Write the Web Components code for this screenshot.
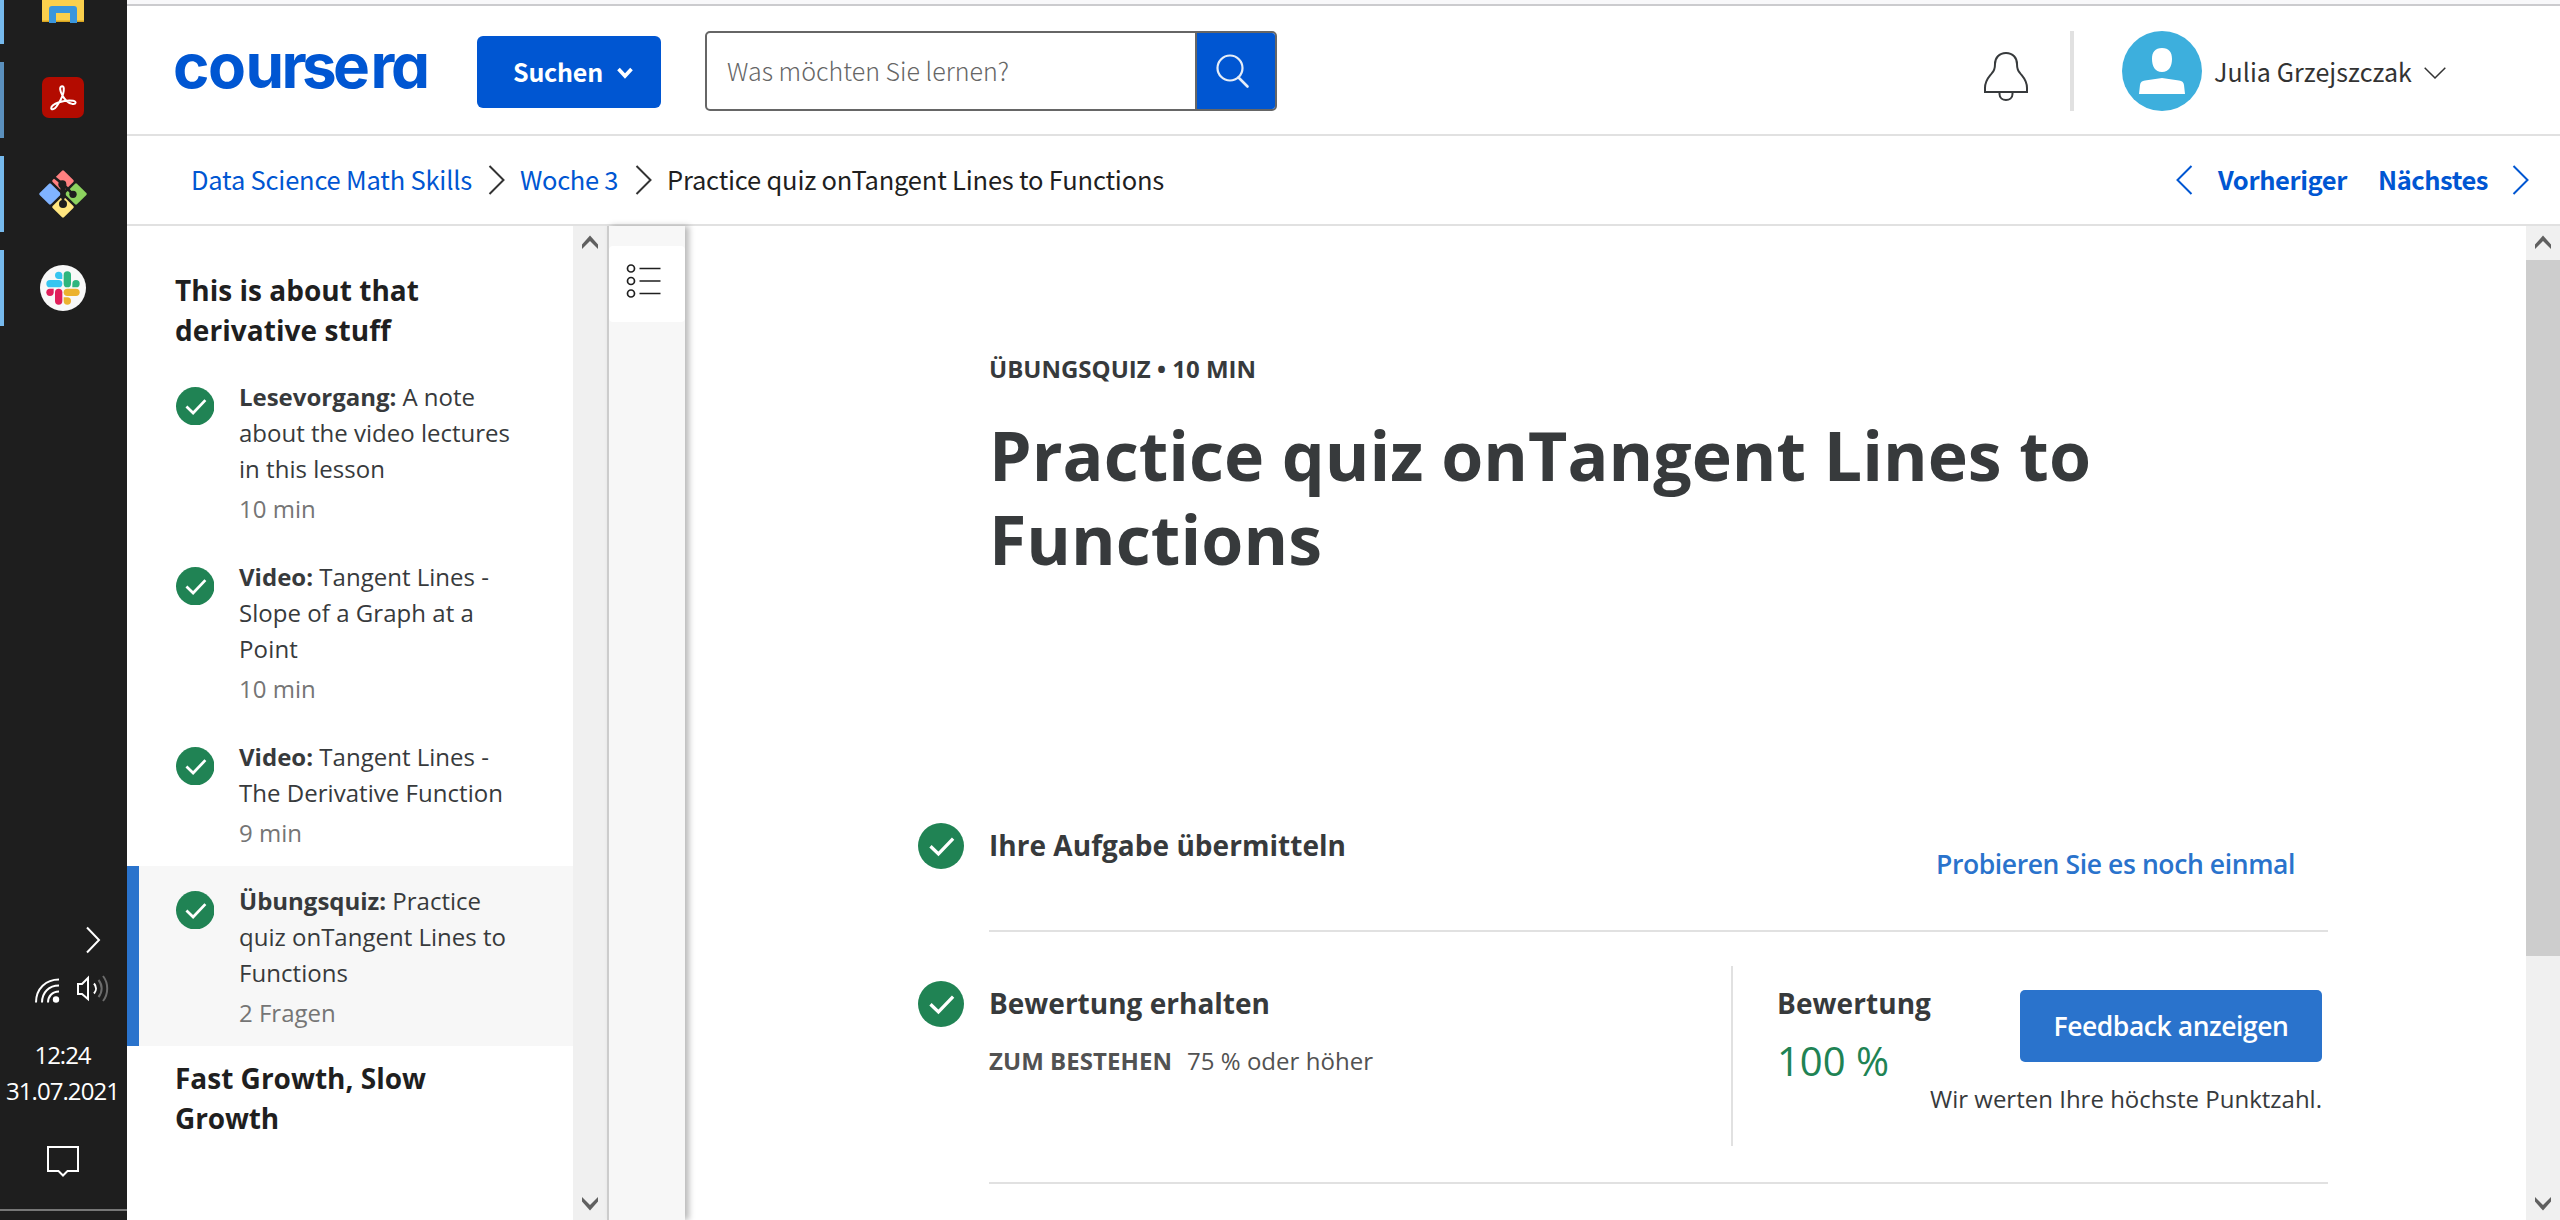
<!DOCTYPE html>
<html lang="de">
<head>
<meta charset="utf-8">
<title>Coursera</title>
<style>
  html, body { margin: 0; height: 100%; overflow: hidden; background: #fff; }
  body { font-family: "Open Sans", "Noto Sans", sans-serif; color: #373a3c; }
</style>
</head>
<body>
<course-app></course-app>
<script>
const SOURCE = '"Noto Sans CJK SC", "Noto Sans", sans-serif';

function define(name, html, after) {
  customElements.define(name, class extends HTMLElement {
    constructor() {
      super();
      this.attachShadow({ mode: 'open' });
    }
    connectedCallback() {
      this.shadowRoot.innerHTML = typeof html === 'function' ? html(this) : html;
      if (after) after(this);
    }
  });
}

/* One line of text, tracked so that it spans the width given in its attribute. */
define('text-line', `<style>
  :host { display: block; white-space: nowrap; }
  span { display: inline-block; white-space: pre; }
</style><span><slot></slot></span>`, el => {
  const w = parseFloat(el.getAttribute('width'));
  if (!w) return;
  const span = el.shadowRoot.querySelector('span');
  const fit = () => {
    el.style.width = 'auto';
    span.style.letterSpacing = '0';
    const n = el.textContent.length;
    const natural = span.getBoundingClientRect().width;
    if (natural) span.style.letterSpacing = ((w - natural) / n) + 'px';
    el.style.width = w + 'px';
  };
  requestAnimationFrame(fit);
});

define('check-mark', el => `<style>
  :host { display: block; flex: none; width: ${el.getAttribute('size')}px; height: ${el.getAttribute('size')}px; }
  svg { display: block; width: 100%; height: 100%; }
</style><svg viewBox="0 0 38 38"><circle cx="19" cy="19" r="19" fill="#208354"/>
<path d="M10.3 19.2l6.6 6.4L29 13" fill="none" stroke="#fff" stroke-width="2.7"/></svg>`);

define('scroll-bar', el => `<style>
  :host { display: flex; flex-direction: column; flex: none; width: 34px; height: 994px; background: #f0f0f0; }
  svg { display: block; flex: none; width: 34px; height: 34px; }
  .thumb { height: ${el.getAttribute('thumb') || 0}px; background: #cdcdcd; }
  .gap { flex: 1; }
</style>
<svg viewBox="0 0 34 34"><path d="M9 18.500L17 9.500l8 9v4.500l-8-8-8 8z" fill="#606060"/></svg>
<div class="thumb"></div><div class="gap"></div>
<svg viewBox="0 0 34 34"><path d="M9 11l8 8 8-8v4.500l-8 9-8-9z" fill="#606060"/></svg>`);

define('task-bar', `<style>
  :host { display: flex; flex-direction: column; width: 127px; height: 1220px; flex: none; background: #1e1e1e; color: #fff; overflow: hidden; }
  .apps { display: flex; flex-direction: column; gap: 18px; margin-top: -32px; }
  .app { display: flex; align-items: center; height: 76px; }
  .app::before { content: ""; width: 4px; height: 76px; background: #76b9ed; }
  .app.dim::before { background: #5b90bd; }
  .app svg { display: block; margin-left: 35px; }
  svg { display: block; flex: none; overflow: visible; }
  .more { margin: 600px 0 0 86px; }
  .status { display: flex; margin: 20px 0 0 34px; gap: 16px; }
  .clock { margin-top: 33px; display: flex; flex-direction: column; align-items: center; font: 24px/36px "Open Sans", "Noto Sans", sans-serif; height: 72px; padding-right: 2px; }
  .note { margin: 35px 0 0 46px; }
  hr { margin: 31px 0 0; border: 0; height: 2px; background: #777; flex: none; }
</style>
<div class="apps">
  <div class="app"><svg width="48" height="48" viewBox="39 -18 48 48"><path d="M42-18h42v40H42z" fill="#fbd04d"/><path d="M42 20.500h42V22H42z" fill="#d9a520"/><path d="M49 23V9q0-3 3-3h22q3 0 3 3v14h-7V13H56v10z" fill="#3a96dd"/></svg></div>
  <div class="app dim"><svg width="48" height="48" viewBox="39 76 48 48"><rect x="42" y="77" width="42" height="41" rx="7" fill="#b30b00"/>
    <path transform="translate(42 77)" d="M20 9.200c-3 .3-1.900 5 .4 9.200 2.400 4.200 6.400 7.700 9.800 8.500 4 .8 4.600-2.500 1-3.100-4-.7-10.200.2-14.200 1.500-4.300 1.500-7.800 4-7.800 6 .2 2 3.400.9 5.300-1.800 2.700-3.800 5.500-8.600 6.700-13 .9-3.500 1.100-7.500-1.200-7.300z" fill="none" stroke="#fff" stroke-width="2"/></svg></div>
  <div class="app"><svg width="48" height="48" viewBox="117 510 144 144">
    <g><rect x="-24" y="-24" width="48" height="48" rx="4" transform="translate(189 543) rotate(45)" fill="#ff8080"/>
    <rect x="-24" y="-24" width="48" height="48" rx="4" transform="translate(150 582) rotate(45)" fill="#80b3ff"/>
    <rect x="-24" y="-24" width="48" height="48" rx="4" transform="translate(228 582) rotate(45)" fill="#8dd35f"/>
    <rect x="-24" y="-24" width="48" height="48" rx="4" transform="translate(189 621) rotate(45)" fill="#ffe680"/></g>
    <path d="M163 532l26 21v58M189 552l30 31" fill="none" stroke="#1e1e1e" stroke-width="8"/>
    <path d="M181 548h16v44l-8 8-8-8z" fill="#1e1e1e"/>
    <g fill="#1e1e1e"><circle cx="187" cy="553" r="12"/><circle cx="219" cy="583" r="11"/><circle cx="189" cy="612" r="12"/></g></svg></div>
  <div class="app"><svg width="48" height="48" viewBox="117 792 144 144"><circle cx="189" cy="864" r="69" fill="#f8f8f8"/>
    <g fill="#36c5f0"><rect x="139" y="840" width="48" height="22" rx="11"/><path d="M187 837h-11a11 11 0 1 1 11-11z"/></g>
    <g fill="#2eb67d"><rect x="191" y="814" width="22" height="48" rx="11"/><path d="M217 862v-11a11 11 0 1 1 11 11z"/></g>
    <g fill="#ecb22e"><rect x="191" y="866" width="48" height="22" rx="11"/><path d="M191 892h11a11 11 0 1 1-11 11z"/></g>
    <g fill="#e01e5a"><rect x="165" y="866" width="22" height="48" rx="11"/><path d="M161 866v11a11 11 0 1 1-11-11z"/></g></svg></div>
</div>
<svg class="more" width="14" height="28" viewBox="0 0 14 28"><path d="M1 1.500L13 14 1 26.500" fill="none" stroke="#fff" stroke-width="2"/></svg>
<div class="status">
  <svg width="26" height="30" viewBox="0 0 26 30"><g fill="none" stroke="#fff" stroke-width="2"><path d="M2 28.500C2 14.500 12 5.500 25 5.500"/><path d="M8 28.500C8 18.500 15 11.500 25 11.500"/><path d="M14 28.500c0-6 4-11 11-11"/></g><circle cx="22" cy="25.500" r="3.200" fill="#fff"/></svg>
  <svg width="34" height="30" viewBox="0 0 34 30"><g fill="none" stroke-width="2"><path d="M12 4v21l-6-5H2V10h4z" stroke="#fff"/><path d="M18 9.500c2.600 3 2.600 7 0 10" stroke="#fff"/><path d="M22.500 6c4.200 5 4.200 12 0 17M27 2c5.600 7 5.600 18 0 25" stroke="#6c6c6c"/></g></svg>
</div>
<div class="clock"><text-line width="56">12:24</text-line><text-line width="113">31.07.2021</text-line></div>
<svg class="note" width="34" height="34" viewBox="0 0 34 34"><path d="M2 3h30v24H21.500L17 31.500 12.500 27H2z" fill="none" stroke="#fff" stroke-width="2"/></svg>
<hr>`);

define('page-header', `<style>
  :host { display: flex; align-items: center; height: 130px; box-sizing: border-box; padding: 2px 114px 0 47px; border-bottom: 2px solid #e1e1e1; font-family: ${SOURCE}; }
  svg { display: block; flex: none; overflow: visible; }
  .btn { display: flex; align-items: center; box-sizing: border-box; width: 184px; height: 72px; margin-left: 47px; margin-top: 2px; padding: 0 28px 2px 36px; border-radius: 6px; background: #0056d2; color: #fff; font-weight: 700; font-size: 25px; line-height: 40px; }
  .btn svg { margin: 3px 0 0 14px; }
  .search { display: flex; box-sizing: border-box; width: 572px; height: 80px; margin-left: 44px; border: 2px solid #666; border-radius: 5px; overflow: hidden; }
  .search .field { flex: 1; display: flex; align-items: center; padding: 0 0 2px 20px; font-weight: 300; font-size: 25px; line-height: 40px; color: #666; }
  .search .go { width: 78px; border-left: 2px solid #666; background: #0056d2; display: flex; align-items: center; }
  .go svg { margin-left: 18px; }
  .bell { margin: 12px 0 0 auto; }
  .sep { width: 4px; height: 80px; margin-left: 41px; background: #e1e1e1; }
  .face { margin-left: 48px; }
  .name { margin: -1px 12px 0 12px; font-size: 25px; line-height: 40px; color: #333; }
</style>
<svg width="256" height="60" viewBox="0 0 256 60"><text x="-1 34 71.5 107.5 128 159 196.5 217" y="47" font-family="Inter, sans-serif" font-weight="750" font-size="62" fill="#0056d2" style="font-feature-settings:'cv11'">coursera</text></svg>
<div class="btn"><text-line width="90">Suchen</text-line><svg width="16" height="12" viewBox="0 0 16 12"><path d="M1.500 2L8 9l6.500-7" fill="none" stroke="#fff" stroke-width="3.600"/></svg></div>
<div class="search"><div class="field"><text-line width="282">Was möchten Sie lernen?</text-line></div>
  <div class="go"><svg width="34" height="34" viewBox="0 0 34 34"><circle cx="15" cy="14" r="12.500" fill="none" stroke="#e5edf8" stroke-width="2.200"/><path d="M23.500 23.500l9 9" stroke="#e5edf8" stroke-width="2.600" stroke-linecap="round"/></svg></div></div>
<svg class="bell" width="46" height="50" viewBox="0 0 46 50"><path d="M2 40v-4c0-8 4-11 7-15 3-3 3-6 3-9 0-6 4-11 11-11s11 5 11 11c0 3 0 6 3 9 3 4 7 7 7 15v4zM16.500 40v2c0 8 13 8 13 0v-2" fill="none" stroke="#373a3c" stroke-width="2"/></svg>
<div class="sep"></div>
<svg class="face" width="80" height="80" viewBox="0 0 80 80"><circle cx="40" cy="40" r="40" fill="#3dafdd"/><path d="M40 17c7 0 10 4 10 11 0 7-3 13-10 13s-10-6-10-13c0-7 3-11 10-11zM17 63l1-9c.5-3 2-4 5-4.500L40 47l17 2.500c3 .5 4.500 1.500 5 4.500l1 9z" fill="#fff"/></svg>
<text-line class="name" width="198">Julia Grzejszczak</text-line>
<svg style="margin-top:3px" width="22" height="12" viewBox="0 0 22 12"><path d="M.7.700L11 11 21.300.700" fill="none" stroke="#333" stroke-width="1.500"/></svg>`);

define('bread-crumbs', `<style>
  :host { display: flex; align-items: center; box-sizing: border-box; height: 90px; padding: 0 31px 0 64px; border-bottom: 2px solid #e1e1e1; font-family: ${SOURCE}; font-size: 25.500px; line-height: 40px; color: #1f1f1f; }
  text-line { margin-top: -3px; }
  .link { color: #0056d2; }
  .nav { color: #0056d2; font-weight: 700; }
  svg { display: block; flex: none; }
  .grow { flex: 1; }
</style>
<text-line class="link" width="281">Data Science Math Skills</text-line>
<svg style="margin:0 15px 0 16px" width="17" height="30" viewBox="0 0 17 30"><path d="M1.500 1L15.500 15 1.500 29" fill="none" stroke="#333" stroke-width="2"/></svg>
<text-line class="link" width="98">Woche 3</text-line>
<svg style="margin:0 15px 0 17px" width="17" height="30" viewBox="0 0 17 30"><path d="M1.500 1L15.500 15 1.500 29" fill="none" stroke="#333" stroke-width="2"/></svg>
<text-line width="497">Practice quiz onTangent Lines to Functions</text-line>
<div class="grow"></div>
<svg style="margin-right:25px" width="17" height="30" viewBox="0 0 17 30"><path d="M15.500 1L1.500 15l14 14" fill="none" stroke="#0056d2" stroke-width="2"/></svg>
<text-line class="nav" width="129">Vorheriger</text-line>
<text-line class="nav" width="110" style="margin-left:31px">Nächstes</text-line>
<svg style="margin-left:24px" width="17" height="30" viewBox="0 0 17 30"><path d="M1.500 1L15.500 15 1.500 29" fill="none" stroke="#0056d2" stroke-width="2"/></svg>`);

define('lesson-item', el => `<style>
  :host { display: flex; box-sizing: border-box; padding: 17px 0 15px 36px; border-left: 12px solid ${el.hasAttribute('current') ? '#2a73cc' : 'transparent'}; ${el.hasAttribute('current') ? 'background:#f7f7f7;' : ''} font-size: 24px; line-height: 36px; }
  check-mark { margin: 7.500px 25px 0 .5px; }
  .meta { margin-top: 4px; color: #757575; }
</style><check-mark size="38.5"></check-mark><div><slot></slot><div class="meta">${el.getAttribute('meta')}</div></div>`);

define('lesson-list', `<style>
  :host { display: block; width: 446px; height: 994px; flex: none; overflow: hidden; }
  h2 { margin: 0; padding: 12px 0 12px 48px; font-size: 28px; line-height: 40px; font-weight: 700; color: #1f1f1f; }
  h2:first-of-type { padding-top: 44px; }
  b { font-weight: 700; }
</style>
<h2><text-line width="244">This is about that</text-line><text-line width="216">derivative stuff</text-line></h2>
<lesson-item meta="10 min"><text-line width="236"><b>Lesevorgang:</b> A note</text-line><text-line width="271">about the video lectures</text-line><text-line width="146">in this lesson</text-line></lesson-item>
<lesson-item meta="10 min"><text-line width="250"><b>Video:</b> Tangent Lines -</text-line><text-line width="235">Slope of a Graph at a</text-line><text-line width="59">Point</text-line></lesson-item>
<lesson-item meta="9 min"><text-line width="250"><b>Video:</b> Tangent Lines -</text-line><text-line width="264">The Derivative Function</text-line></lesson-item>
<lesson-item meta="2 Fragen" current><text-line width="242"><b>Übungsquiz:</b> Practice</text-line><text-line width="267">quiz onTangent Lines to</text-line><text-line width="109">Functions</text-line></lesson-item>
<h2><text-line width="251">Fast Growth, Slow</text-line><text-line width="104">Growth</text-line></h2>`);

define('tool-rail', `<style>
  :host { display: block; box-sizing: border-box; flex: none; width: 78px; height: 994px; padding-top: 20px; border-left: 2px solid #ccc; background: #f7f7f7; box-shadow: 4px 0 6px rgba(0,0,0,.27); }
  div { height: 76px; border-radius: 4px; background: #fff; display: flex; align-items: center; }
  svg { display: block; margin: -7px 0 0 17px; }
</style><div><svg width="36" height="36" viewBox="0 0 36 36"><g fill="none" stroke="#1f1f1f" stroke-width="1.700"><circle cx="5" cy="5.500" r="3.500"/><circle cx="5" cy="18" r="3.500"/><circle cx="5" cy="30.500" r="3.500"/><path d="M13.500 5.500h21M13.500 18h21M13.500 30.500h21"/></g></svg></div>`);

define('quiz-step', `<style>
  :host { display: flex; box-sizing: border-box; }
  check-mark { margin: 32px 25px 0 0; }
  .body { width: 1339px; display: flex; box-sizing: border-box; border-bottom: 2px solid #e1e1e1; height: 100%; }
</style><check-mark size="46"></check-mark><div class="body"><slot></slot></div>`);

define('quiz-page', `<style>
  :host { display: block; flex: 1; height: 994px; overflow: hidden; box-sizing: border-box; padding: 125px 0 0 233px; }
  .eyebrow, h1 { margin-left: 71px; }
  .eyebrow { font-size: 24px; line-height: 36px; font-weight: 700; }
  h1 { margin-top: 26px; margin-bottom: 0; font-size: 68px; line-height: 84px; font-weight: 700; }
  .title { font-size: 28px; line-height: 40px; font-weight: 700; }
  .one { height: 141px; margin-top: 210px; }
  .two { height: 252px; }
  .one .title { margin: 34px auto 0 0; }
  .again { margin: 53px 33px 0 0; font-size: 26.500px; line-height: 40px; font-weight: 600; color: #2a73cc; }
  .left { margin-top: 51px; flex: 1; }
  .pass { display: flex; gap: 15px; margin: 20px 0 0; font-size: 24px; line-height: 36px; color: #525252; }
  .result { display: flex; box-sizing: border-box; width: 597px; height: 180px; margin-top: 34px; border-left: 2px solid #e1e1e1; padding: 17px 6px 0 44px; }
  .pct { font-size: 40px; line-height: 56px; color: #208354; margin-top: 10px; }
  .score { width: 152px; flex: none; }
  .act { flex: 1; display: flex; flex-direction: column; align-items: flex-end; }
  .fb { display: flex; align-items: center; justify-content: center; width: 302px; height: 72px; margin-top: 7px; border-radius: 5px; background: #2a73cc; color: #fff; font-size: 26.500px; line-height: 40px; font-weight: 600; }
  .high { margin-top: 19px; font-size: 24px; line-height: 36px; }
</style>
<text-line class="eyebrow" width="267">ÜBUNGSQUIZ • 10 MIN</text-line>
<h1><text-line width="1102">Practice quiz onTangent Lines to</text-line><text-line width="333">Functions</text-line></h1>
<quiz-step class="one"><text-line class="title" width="357">Ihre Aufgabe übermitteln</text-line><text-line class="again" width="359">Probieren Sie es noch einmal</text-line></quiz-step>
<quiz-step class="two">
  <div class="left"><text-line class="title" width="281">Bewertung erhalten</text-line>
  <div class="pass"><text-line width="183" style="font-weight:700">ZUM BESTEHEN</text-line><text-line width="186">75 % oder höher</text-line></div></div>
  <div class="result"><div class="score"><text-line class="title" width="154">Bewertung</text-line><text-line class="pct" width="112">100 %</text-line></div>
  <div class="act"><div class="fb"><text-line width="235">Feedback anzeigen</text-line></div><text-line class="high" width="392">Wir werten Ihre höchste Punktzahl.</text-line></div></div>
</quiz-step>`, el => {
  const second = el.shadowRoot.querySelector('.two');
  const mark = second.shadowRoot && second.shadowRoot.querySelector('check-mark');
  if (mark) mark.style.marginTop = '49px';
});

define('course-app', `<style>
  :host { display: flex; width: 2560px; height: 1220px; overflow: hidden; }
  .page { flex: 1; min-width: 0; display: flex; flex-direction: column; background: #fff; }
  .strip { height: 4px; background: #f8f8fa; border-bottom: 2px solid #cbcbce; }
  page-header, bread-crumbs { flex: none; }
  .body { display: flex; height: 994px; }
</style>
<task-bar></task-bar>
<div class="page">
  <div class="strip"></div>
  <page-header></page-header>
  <bread-crumbs></bread-crumbs>
  <div class="body"><lesson-list></lesson-list><scroll-bar></scroll-bar><tool-rail></tool-rail><quiz-page></quiz-page><scroll-bar thumb="696"></scroll-bar></div>
</div>`);
</script>
</body>
</html>
